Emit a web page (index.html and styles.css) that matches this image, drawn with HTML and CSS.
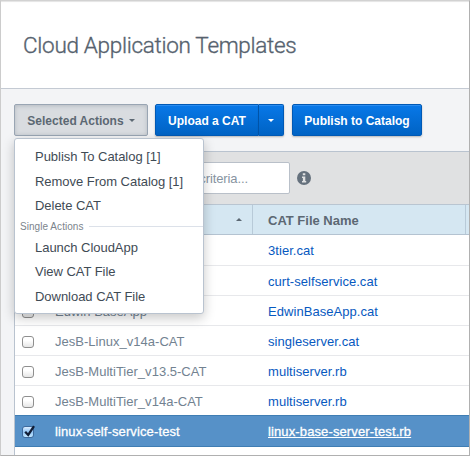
FILE: index.html
```html
<!DOCTYPE html>
<html lang="en">
<head>
<meta charset="utf-8">
<title>Cloud Application Templates</title>
<link rel="stylesheet" href="styles.css">
</head>
<body>
<div class="app">
  <header class="page-header"><h1>Cloud Application Templates</h1></header>
  <div class="toolbar">
    <div class="dropdown">
      <button class="btn btn-active"><span>Selected Actions</span><i class="caret"></i></button>
      <div class="menu">
        <a class="item">Publish To Catalog [1]</a>
        <a class="item">Remove From Catalog [1]</a>
        <a class="item">Delete CAT</a>
        <div class="group"><span>Single Actions</span></div>
        <a class="item">Launch CloudApp</a>
        <a class="item">View CAT File</a>
        <a class="item">Download CAT File</a>
      </div>
    </div>
    <div class="split">
      <button class="btn btn-primary upload">Upload a CAT</button>
      <button class="btn btn-primary toggle" aria-label="More"><i class="caret"></i></button>
    </div>
    <button class="btn btn-primary publish">Publish to Catalog</button>
  </div>
  <main class="panel">
    <div class="filter">
      <div class="search"><span>criteria...</span></div>
      <svg class="info" viewBox="0 0 14 14"><circle cx="7" cy="7" r="7"/><path d="M5.8 2.2h2.5v2H5.8zM5 5.5h3.3v4.6h.9v1.4H5v-1.4h.9V6.9H5z"/></svg>
    </div>
    <div class="row head">
      <div class="name"><i class="sort"></i></div>
      <div class="file">CAT File Name</div>
    </div>
    <div class="row first"><div class="check"><i class="box"></i></div><div class="name"></div><div class="file"><a>3tier.cat</a></div></div>
    <div class="row"><div class="check"><i class="box"></i></div><div class="name"></div><div class="file"><a>curt-selfservice.cat</a></div></div>
    <div class="row"><div class="check"><i class="box"></i></div><div class="name">Edwin BaseApp</div><div class="file"><a>EdwinBaseApp.cat</a></div></div>
    <div class="row"><div class="check"><i class="box"></i></div><div class="name">JesB-Linux_v14a-CAT</div><div class="file"><a>singleserver.cat</a></div></div>
    <div class="row"><div class="check"><i class="box"></i></div><div class="name">JesB-MultiTier_v13.5-CAT</div><div class="file"><a>multiserver.rb</a></div></div>
    <div class="row last"><div class="check"><i class="box"></i></div><div class="name">JesB-MultiTier_v14a-CAT</div><div class="file"><a>multiserver.rb</a></div></div>
    <div class="row selected"><div class="check"><i class="box checked"><svg viewBox="0 0 14 14"><path d="M3.2 6.8l3 3.2L12 1.2"/></svg></i></div><div class="name">linux-self-service-test</div><div class="file"><a>linux-base-server-test.rb</a></div></div>
  </main>
</div>
</body>
</html>
```

FILE: styles.css
```css
* { box-sizing: border-box; }
body {
  margin: 0;
  font: 13px/16px "Liberation Sans", Arial, sans-serif;
  color: #3f4b55;
}
.app {
  width: 470px;
  height: 456px;
  overflow: hidden;
  border: 1px solid #b0b0b0;
  border-left-color: #ccc;
  border-top-color: #d2d2d2;
  background: #f3f4f6;
  display: flex;
  flex-direction: column;
}
.page-header {
  height: 88px;
  flex: none;
  padding: 29px 0 0 22px;
  background: #fff;
  border-bottom: 1px solid #c4cad3;
  box-shadow: inset 0 2px 1px -1px #e4e4e4;
}
h1 {
  margin: 0;
  font: 300 22.5px/30px Roboto, sans-serif;
  -webkit-text-stroke: .35px #56626e;
  letter-spacing: -.3px;
  color: #56626e;
  white-space: nowrap;
}
.toolbar {
  height: 62px;
  flex: none;
  padding: 15px 0 0 13px;
  display: flex;
  align-items: flex-start;
}
.btn {
  height: 32px;
  padding: 1px 0 0;
  display: flex;
  align-items: center;
  justify-content: center;
  border: 1px solid #0059b5;
  border-radius: 2px;
  font: bold 12px/16px "Liberation Sans", Arial, sans-serif;
  white-space: nowrap;
}
.btn-active {
  width: 134px;
  gap: 5px;
  color: #5c6873;
  background: #d9dce0;
  border-color: #99a5b3;
  box-shadow: inset 0 1px 4px #b4bac1;
}
.btn-primary {
  color: #fff;
  background: linear-gradient(#0878e8, #0063c4);
  box-shadow: inset 0 1px #2a8cf0, 0 1px 2px rgba(0, 0, 0, .25);
}
.caret {
  border: 3px solid transparent;
  border-top-color: currentColor;
  border-bottom: 0;
}
.split { display: flex; margin-left: 7px; }
.upload { width: 104px; border-radius: 2px 0 0 2px; }
.toggle { width: 25px; border-left: 0; border-radius: 0 2px 2px 0; }
.publish { width: 130px; margin-left: 8px; }
.dropdown { position: relative; }
.menu {
  position: absolute;
  z-index: 2;
  top: 34px;
  left: 0;
  width: 190px;
  height: 176px;
  padding-top: 5px;
  background: #fff;
  border: 1px solid #b9c3cf;
  border-radius: 3px;
  box-shadow: 0 4px 12px rgba(0, 0, 0, .22);
}
.item {
  display: block;
  height: 24.5px;
  padding-left: 20px;
  line-height: 25px;
  letter-spacing: -.03px;
  white-space: nowrap;
}
.group {
  height: 17px;
  padding: 1px 0 0 5px;
  display: flex;
  align-items: center;
  gap: 5px;
  color: #7b848c;
  font-size: 10px;
  letter-spacing: .05px;
}
.group::after { content: ""; flex: 1; height: 1px; background: #dce1e9; }
.panel {
  flex: 1;
  margin-left: 13px;
  border: solid #b9c3cf;
  border-width: 1px 0 0 1px;
  background: #fff;
}
.filter {
  height: 52px;
  padding: 10px 0 0 7px;
  display: flex;
  background: #e0e1e2;
}
.search {
  width: 268px;
  height: 32px;
  padding: 1px 41px 0 0;
  display: flex;
  align-items: center;
  justify-content: flex-end;
  border: 1px solid #b9c0c9;
  border-radius: 2px;
  background: #fff;
  color: #8794a1;
  letter-spacing: -.1px;
}
.info { width: 14px; height: 14px; margin: 9px 0 0 7px; fill: #65717d; }
.info path { fill: #e0e1e2; }
.row {
  height: 30px;
  padding-top: 2px;
  display: flex;
  align-items: center;
  border-bottom: 1px solid #e7e8eb;
  white-space: nowrap;
}
.row.first { height: 31px; }
.check { width: 40px; padding-left: 7px; }
.name { width: 197px; color: #728291; letter-spacing: .02px; }
.file { padding-left: 16px; letter-spacing: .05px; }
.file a { color: #0759c0; }
.head {
  height: 31px;
  padding-top: 0;
  align-items: stretch;
  border-top: 1px solid #b9c5d1;
  border-bottom-color: #b4c3d1;
  background: #d5e7f2;
  color: #5c6873;
  font-weight: bold;
  line-height: 31px;
}
.head .name {
  width: 238px;
  padding: 13px 10px 0 0;
  display: flex;
  justify-content: flex-end;
  border-right: 1px solid #b8cad8;
}
.head .file { width: 213px; padding-left: 15px; border-right: 1px solid #b8cad8; letter-spacing: 0; }
.sort {
  width: 6px;
  height: 3px;
  border: 3px solid transparent;
  border-bottom-color: #5c6873;
  border-top: 0;
}
.box {
  display: block;
  width: 12px;
  height: 12px;
  border: 1px solid #8f8f8f;
  border-radius: 3px;
  background: linear-gradient(#fff 35%, #e6e6e6);
}
.row.last { height: 29px; border-bottom: 0; }
.selected {
  height: 32px;
  border: solid #3f7db3;
  border-width: 1px 0;
  background: #5691c8;
}
.selected .name, .selected .file a { color: #fff; -webkit-text-stroke: .3px #fff; letter-spacing: .12px; }
.selected .file a { text-decoration: underline; }
.checked { border-color: #3e6a9d; background: linear-gradient(#d9ecff, #91c5f5 50%, #c1e7ff); }
.checked svg {
  display: block;
  width: 14px;
  height: 14px;
  margin: -2px 0 0 -1px;
  overflow: visible;
  fill: none;
  stroke: #111d35;
  stroke-width: 2.3;
}
```
